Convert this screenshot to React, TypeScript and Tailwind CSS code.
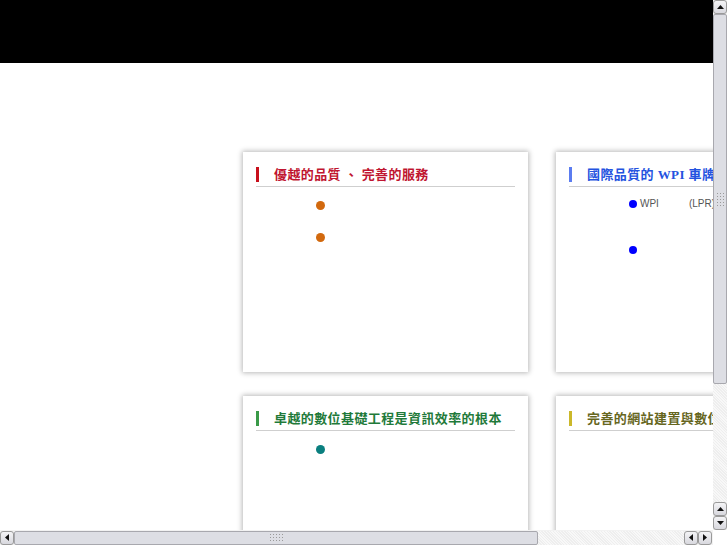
import React from "react";

const serif = { fontFamily: '"Liberation Serif", "Noto Sans CJK TC", serif' };

function Title({ bar, color, text }: { bar: string; color: string; text: React.ReactNode }) {
  return (
    <div className="mx-[13px] pt-[15px]">
      <div className="flex h-[20px] items-start border-b border-[#cfcfcf]">
        <div className={`w-[3px] h-[15px] shrink-0 ${bar}`} />
        <div
          className={`ml-[15px] text-[13px] leading-[16px] font-bold whitespace-nowrap tracking-[0.4px] ${color}`}
          style={serif}
        >
          {text}
        </div>
      </div>
    </div>
  );
}

function Card({ children }: { children: React.ReactNode }) {
  return (
    <div className="w-[285px] h-[220px] bg-white shadow-[0_0_5px_1px_rgba(0,0,0,0.28)] overflow-hidden">
      {children}
    </div>
  );
}

function VBtn({ up }: { up: boolean }) {
  return (
    <div className="w-[14px] h-[14px] rounded-[3px] border border-[#9a9a9a] bg-gradient-to-b from-[#f4f4f6] to-[#d8d8de] flex items-center justify-center">
      <svg width="7" height="4" viewBox="0 0 7 4">
        {up ? <polygon points="0,4 7,4 3.5,0" fill="#111" /> : <polygon points="0,0 7,0 3.5,4" fill="#111" />}
      </svg>
    </div>
  );
}

function HBtn({ left }: { left: boolean }) {
  return (
    <div className="w-[14px] h-[14px] rounded-[3px] border border-[#9a9a9a] bg-gradient-to-b from-[#f4f4f6] to-[#d8d8de] flex items-center justify-center">
      <svg width="4" height="7" viewBox="0 0 4 7">
        {left ? <polygon points="4,0 4,7 0,3.5" fill="#111" /> : <polygon points="0,0 0,7 4,3.5" fill="#111" />}
      </svg>
    </div>
  );
}

function Grip({ vertical }: { vertical: boolean }) {
  const dots = [];
  const cols = vertical ? 3 : 5;
  const rows = vertical ? 5 : 3;
  for (let i = 0; i < cols * rows; i++) dots.push(<div key={i} className="w-[1px] h-[1px] bg-[#9a9a9a]" />);
  return (
    <div className={`grid gap-[2px] ${vertical ? "grid-cols-3" : "grid-cols-5"}`}>{dots}</div>
  );
}

export default function App() {
  return (
    <div className="w-[727px] h-[545px] overflow-hidden flex flex-col bg-white" style={{ fontFamily: '"Liberation Sans", sans-serif' }}>
      <div className="flex h-[530px]">
        {/* page content */}
        <div className="w-[713px] h-[530px] overflow-hidden">
          <div className="h-[63px] bg-black" />
          <div className="pt-[89px] pl-[243px] grid grid-cols-[285px_285px] gap-x-[28px] gap-y-[24px] w-[900px]">
            <Card>
              <Title bar="bg-[#c8101c]" color="text-[#c01530]" text="優越的品質 、 完善的服務" />
              <div className="pl-[73px] pt-[14px] flex flex-col gap-[23px]">
                <div className="w-[9px] h-[9px] rounded-full bg-[#d2690e]" />
                <div className="w-[9px] h-[9px] rounded-full bg-[#d2690e]" />
              </div>
            </Card>
            <Card>
              <Title bar="bg-[#5b7cf0]" color="text-[#2453e0]" text="國際品質的 WPI 車牌辨識系統" />
              <div className="pl-[73px] pt-[13px] flex flex-col">
                <div className="flex items-center h-[8px]">
                  <div className="w-[8px] h-[8px] rounded-full bg-[#0000ff] shrink-0" />
                  <span className="ml-[3px] text-[10px] leading-[10px] text-[#555]">WPI</span>
                  <span className="ml-[30px] text-[10px] leading-[10px] text-[#555]">(LPR)</span>
                </div>
                <div className="mt-[38px] w-[8px] h-[8px] rounded-full bg-[#0000ff]" />
              </div>
            </Card>
            <Card>
              <Title bar="bg-[#3a9a48]" color="text-[#1f7a3a]" text="卓越的數位基礎工程是資訊效率的根本" />
              <div className="pl-[73px] pt-[14px]">
                <div className="w-[9px] h-[9px] rounded-full bg-[#0a7f7f]" />
              </div>
            </Card>
            <Card>
              <Title bar="bg-[#cbb82a]" color="text-[#66661e]" text="完善的網站建置與數位行銷" />
            </Card>
          </div>
        </div>
        {/* vertical scrollbar */}
        <div className="w-[14px] h-[530px] flex flex-col bg-[#f2f2f2]">
          <VBtn up />
          <div className="h-[370px] mx-0 rounded-[2px] border border-[#a8a8ae] bg-[#dddee4] flex items-center justify-center">
            <Grip vertical />
          </div>
          <div className="flex-1 bg-[repeating-linear-gradient(45deg,#eeeeee_0px,#eeeeee_1px,#f8f8f8_1px,#f8f8f8_2px)]" />
          <VBtn up />
          <VBtn up={false} />
        </div>
      </div>
      {/* horizontal scrollbar */}
      <div className="flex h-[15px]">
        <div className="w-[713px] flex items-center bg-[#f2f2f2]">
          <HBtn left />
          <div className="w-[524px] h-[14px] rounded-[2px] border border-[#a8a8ae] bg-[#dddee4] flex items-center justify-center">
            <Grip vertical={false} />
          </div>
          <div className="flex-1 h-[14px] bg-[repeating-linear-gradient(45deg,#eeeeee_0px,#eeeeee_1px,#f8f8f8_1px,#f8f8f8_2px)]" />
          <HBtn left />
          <HBtn left={false} />
          <div className="w-[1px]" />
        </div>
        <div className="w-[14px] bg-white" />
      </div>
    </div>
  );
}
